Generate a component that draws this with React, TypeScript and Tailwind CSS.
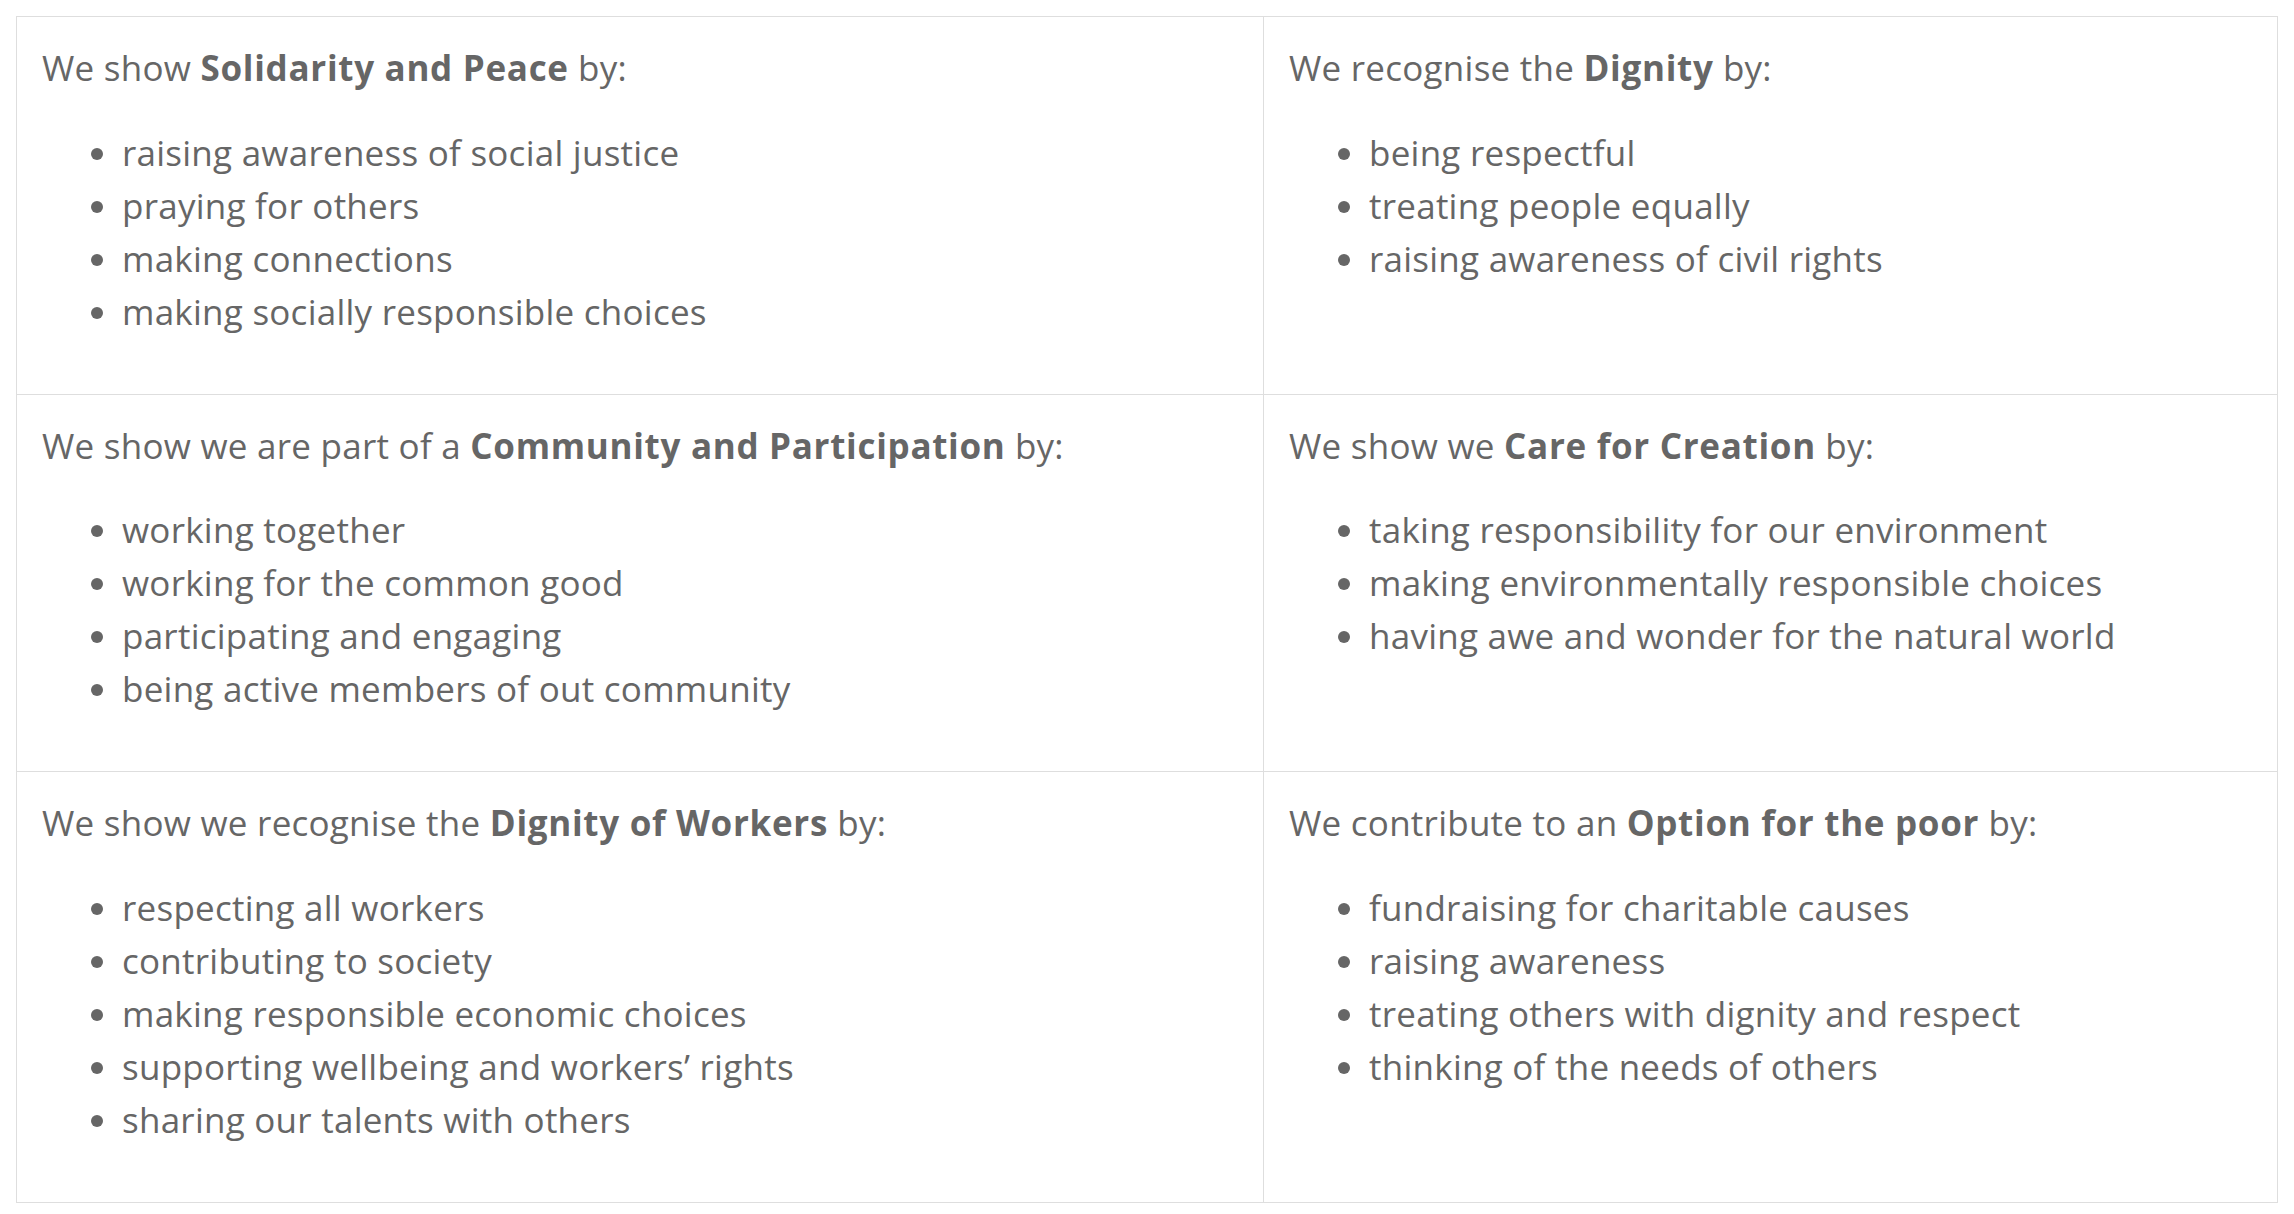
type Value = {
  pre: string
  bold: string
  items: string[]
}

const values: Value[] = [
  {
    pre: "We show",
    bold: "Solidarity and Peace",
    items: [
      "raising awareness of social justice",
      "praying for others",
      "making connections",
      "making socially responsible choices",
    ],
  },
  {
    pre: "We recognise the",
    bold: "Dignity",
    items: ["being respectful", "treating people equally", "raising awareness of civil rights"],
  },
  {
    pre: "We show we are part of a",
    bold: "Community and Participation",
    items: [
      "working together",
      "working for the common good",
      "participating and engaging",
      "being active members of out community",
    ],
  },
  {
    pre: "We show we",
    bold: "Care for Creation",
    items: [
      "taking responsibility for our environment",
      "making environmentally responsible choices",
      "having awe and wonder for the natural world",
    ],
  },
  {
    pre: "We show we recognise the",
    bold: "Dignity of Workers",
    items: [
      "respecting all workers",
      "contributing to society",
      "making responsible economic choices",
      "supporting wellbeing and workers\u2019 rights",
      "sharing our talents with others",
    ],
  },
  {
    pre: "We contribute to an",
    bold: "Option for the poor",
    items: [
      "fundraising for charitable causes",
      "raising awareness",
      "treating others with dignity and respect",
      "thinking of the needs of others",
    ],
  },
]

function ValueCell({ value }: { value: Value }) {
  return (
    <div className="border-b border-r border-[#dedede] px-[25px] py-[25px]">
      <p className="leading-[52.5px]">
        {value.pre} <strong className="font-bold tracking-[0.7px]">{value.bold}</strong> by:
      </p>
      <ul className="my-[31px] list-disc pl-[80px] marker:text-[#666]">
        {value.items.map((item) => (
          <li key={item} className="leading-[53px]">
            {item}
          </li>
        ))}
      </ul>
    </div>
  )
}

export default function App() {
  return (
    <div className="min-h-screen bg-white px-4 pt-4 pb-3 font-['Open_Sans',sans-serif] text-[35px] tracking-[0.25px] text-[#666666]">
      <div className="grid grid-cols-[1247px_1fr] border-l border-t border-[#dedede]">
        {values.map((v) => (
          <ValueCell key={v.bold} value={v} />
        ))}
      </div>
    </div>
  )
}
